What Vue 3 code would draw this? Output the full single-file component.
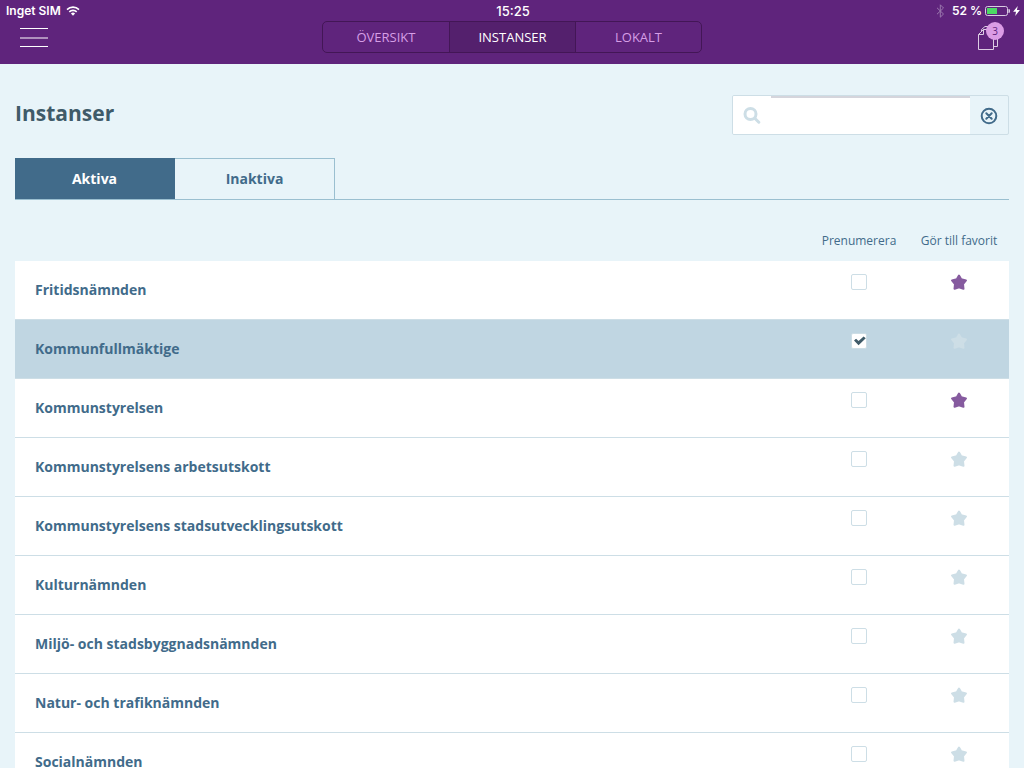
<script setup>
import { ref } from 'vue'

const sections = ['ÖVERSIKT', 'INSTANSER', 'LOKALT']
const section = ref('INSTANSER')
const tabs = ['Aktiva', 'Inaktiva']
const tab = ref('Aktiva')
const query = ref('')

const rows = ref([
  { name: 'Fritidsnämnden', subscribed: false, favorite: true },
  { name: 'Kommunfullmäktige', subscribed: true, favorite: false },
  { name: 'Kommunstyrelsen', subscribed: false, favorite: true },
  { name: 'Kommunstyrelsens arbetsutskott', subscribed: false, favorite: false },
  { name: 'Kommunstyrelsens stadsutvecklingsutskott', subscribed: false, favorite: false },
  { name: 'Kulturnämnden', subscribed: false, favorite: false },
  { name: 'Miljö- och stadsbyggnadsnämnden', subscribed: false, favorite: false },
  { name: 'Natur- och trafiknämnden', subscribed: false, favorite: false },
  { name: 'Socialnämnden', subscribed: false, favorite: false }
])
</script>

<template>
  <div class="app">
    <header class="header">
      <div class="status">
        <div class="status-side">
          <span>Inget SIM</span>
          <svg class="wifi" width="14" height="10" viewBox="0 0 14 10" aria-hidden="true">
            <path d="M1 3.6A8.6 8.6 0 0 1 13 3.6" />
            <path d="M3.3 5.9A5.3 5.3 0 0 1 10.7 5.9" />
            <path class="solid" d="M7 9.8 4.9 7.6A3 3 0 0 1 9.1 7.6Z" />
          </svg>
        </div>
        <span class="clock">15:25</span>
        <div class="status-side status-right">
          <svg class="bluetooth" width="9" height="14" viewBox="0 0 9 14" aria-hidden="true">
            <path d="M1 3.8 7.5 10 4.3 13.2V.8L7.5 4 1 10.2" />
          </svg>
          <span class="percent">52 %</span>
          <svg width="25" height="10" viewBox="0 0 25 10" aria-hidden="true">
            <rect x=".5" y=".5" width="22" height="9" rx="2" fill="none" stroke="#d9cbe2" />
            <rect x="2" y="2" width="10" height="6" fill="#4cd964" />
            <path d="M24 3.3Q25 5 24 6.7Z" fill="#d9cbe2" stroke="#d9cbe2" />
          </svg>
          <svg width="7" height="10" viewBox="0 0 7 10" aria-hidden="true">
            <path d="M4.8 0 .1 5.7H3L2.2 10 6.9 4.1H3.9Z" fill="#fff" />
          </svg>
        </div>
      </div>
      <div class="bar">
        <button class="menu" type="button" aria-label="Meny">
          <span></span><span></span><span></span>
        </button>
        <nav class="segments">
          <button
            v-for="s in sections"
            :key="s"
            type="button"
            :class="{ current: s === section }"
            @click="section = s"
          >{{ s }}</button>
        </nav>
        <button class="documents" type="button" aria-label="Dokument">
          <svg width="22" height="28" viewBox="0 0 22 28" aria-hidden="true">
            <path d="M6.5 6.5H16.5V26.5H1.5V11.5Z M6.5 6.5V11.5H1.5 M17 23.5H20.5V14" />
            <path d="M4.5 8.5V6.5L8 3.5H14" />
          </svg>
          <span class="badge">3</span>
        </button>
      </div>
    </header>

    <main class="content">
      <div class="heading">
        <h1>Instanser</h1>
        <form class="search" @submit.prevent>
          <label for="search" aria-label="Sök">
            <svg width="18" height="18" viewBox="0 0 18 18" aria-hidden="true">
              <circle cx="7.5" cy="8" r="5.5" />
              <path d="M12 12.5 15.8 16.2" />
            </svg>
          </label>
          <input id="search" v-model="query" type="text" />
          <button type="button" aria-label="Rensa" @click="query = ''">
            <svg width="18" height="20" viewBox="0 0 18 20" aria-hidden="true">
              <circle cx="9" cy="11" r="7.3" />
              <path d="M6.3 8.3 11.7 13.7M11.7 8.3 6.3 13.7" />
            </svg>
          </button>
        </form>
      </div>

      <div class="tabs" role="tablist">
        <button
          v-for="t in tabs"
          :key="t"
          type="button"
          role="tab"
          :aria-selected="t === tab"
          :class="{ current: t === tab }"
          @click="tab = t"
        >{{ t }}</button>
      </div>

      <table class="list">
        <thead>
          <tr>
            <th aria-label="Namn"></th>
            <th class="narrow" scope="col">Prenumerera</th>
            <th class="narrow" scope="col">Gör till favorit</th>
          </tr>
        </thead>
        <tbody>
          <tr v-for="row in rows" :key="row.name" :class="{ selected: row.subscribed }">
            <td class="name"><a href="#">{{ row.name }}</a></td>
            <td class="action">
              <input v-model="row.subscribed" type="checkbox" :aria-label="'Prenumerera på ' + row.name" />
            </td>
            <td class="action">
              <button
                type="button"
                class="star"
                :class="{ on: row.favorite }"
                :aria-pressed="row.favorite"
                :aria-label="'Gör ' + row.name + ' till favorit'"
                @click="row.favorite = !row.favorite"
              >
                <svg width="18" height="18" viewBox="0 0 18 18" aria-hidden="true">
                  <path d="M9 2.5 11.2 6.3 16 7.4 13 11 13.5 15.8 9 14.3 4.5 15.8 5 11 2 7.4 6.8 6.3Z" />
                </svg>
              </button>
            </td>
          </tr>
        </tbody>
      </table>
    </main>
  </div>
</template>

<style>
body {
  background: #e8f4f9;
}
</style>

<style scoped>
.app {
  min-height: 100vh;
  background: #e8f4f9;
  color: #416b8a;
  font-family: "Open Sans", "Noto Sans", sans-serif;
  font-size: 14px;
}

.app *,
.app {
  box-sizing: border-box;
}

button {
  margin: 0;
  padding: 0;
  border: 0;
  background: none;
  color: inherit;
  font: inherit;
  cursor: pointer;
}

svg {
  display: block;
}

.header {
  height: 64px;
  background: #5f247c;
  color: #fff;
}

.status {
  display: grid;
  grid-template-columns: 1fr auto 1fr;
  align-items: center;
  height: 21px;
  padding: 0 4px 0 6px;
  font-family: Inter, "Liberation Sans", sans-serif;
  font-size: 12px;
  font-weight: 600;
}

.status-side {
  display: flex;
  align-items: center;
  gap: 5px;
}

.status-right {
  justify-content: flex-end;
  gap: 3px;
}

.clock {
  font-size: 13px;
  font-weight: 500;
}

.percent {
  margin-left: 4px;
}

.wifi path {
  fill: none;
  stroke: #fff;
  stroke-width: 1.6;
}

.wifi .solid {
  fill: #fff;
  stroke: none;
}

.bluetooth {
  fill: none;
  stroke: #9b79ae;
}

.bar {
  display: grid;
  grid-template-columns: 1fr 380px 1fr;
  align-items: center;
  padding: 0 20px;
}

.menu {
  display: flex;
  flex-direction: column;
  gap: 8px;
  width: 28px;
}

.menu span {
  height: 1px;
  background: #fff;
}

.menu span:nth-child(2) {
  height: 2px;
  margin-bottom: -1px;
  background: #af91bd;
}

.segments {
  display: grid;
  grid-template-columns: repeat(3, 1fr);
  height: 32px;
  overflow: hidden;
  border: 1px solid #431656;
  border-radius: 5px;
  font-size: 13px;
}

.segments button {
  color: #d69ee6;
}

.segments button + button {
  border-left: 1px solid #431656;
}

.segments .current {
  background: #54206d;
  color: #fff;
}

.documents {
  position: relative;
  justify-self: end;
  margin-right: 5px;
}

.documents svg {
  fill: none;
  stroke: #dccce3;
}

.badge {
  position: absolute;
  top: -1px;
  right: -5px;
  width: 18px;
  height: 18px;
  border-radius: 50%;
  background: #db9ce5;
  color: #5f247c;
  font-size: 10px;
  line-height: 18px;
}

.content {
  padding: 31px 15px 0;
}

.heading {
  display: flex;
  justify-content: space-between;
  align-items: center;
  height: 40px;
}

h1 {
  margin: 0 0 4px;
  color: #3f5b69;
  font-size: 21px;
  font-weight: 700;
  line-height: 30px;
}

.search {
  display: flex;
  width: 277px;
  height: 40px;
  overflow: hidden;
  border: 1px solid #cddee6;
  border-radius: 2px;
}

.search label,
.search button {
  display: grid;
  place-items: center;
  width: 38px;
}

.search label {
  background: #fff;
}

.search input {
  flex: 1;
  min-width: 0;
  padding: 0 8px;
  border: 0;
  border-top: 2px solid #d5d5dc;
  outline: 0;
  background: #fff;
  color: inherit;
  font: inherit;
}

.search svg {
  fill: none;
  stroke: #cddee6;
  stroke-width: 3;
  stroke-linecap: round;
}

.search button svg {
  stroke: #416b8a;
  stroke-width: 2;
}

.tabs {
  display: flex;
  margin-top: 23px;
  border-bottom: 1px solid #9abfd0;
}

.tabs button {
  width: 160px;
  height: 41px;
  padding-bottom: 2px;
  border: 1px solid #9abfd0;
  border-width: 1px 1px 0 0;
  font-weight: 700;
}

.tabs .current {
  border-color: #416b8a;
  background: #416b8a;
  color: #fff;
}

.list {
  width: 100%;
  margin-top: 21px;
  border-collapse: separate;
  border-spacing: 0;
  table-layout: fixed;
}

th {
  height: 40px;
  padding: 0 0 2px;
  font-size: 12px;
  font-weight: 400;
  white-space: nowrap;
}

.narrow {
  width: 100px;
}

td {
  height: 59px;
  padding: 0;
  border-bottom: 1px solid #cddee6;
  background: #fff;
}

.selected td {
  background: #c0d6e2;
}

.name {
  padding: 0 0 2px 20px;
}

.name a {
  color: #416b8a;
  font-weight: 700;
  text-decoration: none;
}

.action {
  padding-top: 12px;
  text-align: center;
  vertical-align: top;
}

.action input {
  display: block;
  appearance: none;
  width: 16px;
  height: 16px;
  margin: 1px auto 0;
  border: 1px solid #cddee6;
  border-radius: 2px;
  background: #fff;
}

.action input:checked::after {
  content: "";
  display: block;
  width: 12px;
  height: 10px;
  margin: 2px 0 0 2px;
  background: #3f5b69;
  clip-path: polygon(0 45%, 17% 27%, 38% 50%, 80% 4%, 98% 22%, 38% 92%);
}

.star svg {
  fill: #cddee6;
  stroke: #cddee6;
  stroke-width: 2;
  stroke-linejoin: round;
}

.star.on svg {
  fill: #865b9f;
  stroke: #865b9f;
}
</style>
